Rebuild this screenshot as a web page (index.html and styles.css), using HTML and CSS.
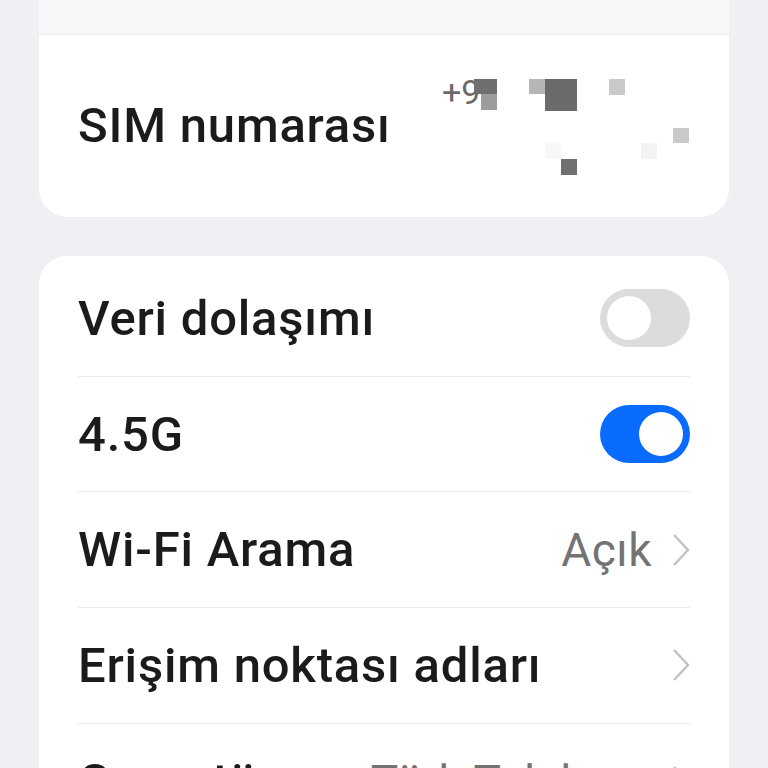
FILE: index.html
```html
<!DOCTYPE html>
<html lang="tr">
<head>
<meta charset="utf-8">
<title>SIM ayarları</title>
<link rel="stylesheet" href="styles.css">
</head>
<body>
<main class="screen">
  <section class="card card-top">
    <div class="prev-row"></div>
    <div class="row row-sim">
      <span class="label">SIM numarası</span>
      <div class="sim-value">
        <span class="sim-prefix">+9</span>
        <i class="px" style="left:30px;top:0;width:23px;height:15px;background:#6f6f6f"></i>
        <i class="px" style="left:37px;top:15px;width:16px;height:16px;background:#9c9c9c"></i>
        <i class="px" style="left:85px;top:0;width:16px;height:15px;background:#b6b6b6"></i>
        <i class="px" style="left:101px;top:0;width:32px;height:32px;background:#6b6b6b"></i>
        <i class="px" style="left:165px;top:0;width:16px;height:16px;background:#c9c9c9"></i>
        <i class="px" style="left:229px;top:49px;width:16px;height:15px;background:#c9c9c9"></i>
        <i class="px" style="left:197px;top:64px;width:16px;height:16px;background:#f3f3f3"></i>
        <i class="px" style="left:101px;top:64px;width:16px;height:16px;background:#f8f8f8"></i>
        <i class="px" style="left:117px;top:80px;width:16px;height:16px;background:#707070"></i>
      </div>
    </div>
  </section>

  <section class="card card-main">
    <div class="row">
      <span class="label">Veri dolaşımı</span>
      <span class="toggle"><span class="knob"></span></span>
    </div>
    <div class="row">
      <span class="label">4.5G</span>
      <span class="toggle on"><span class="knob"></span></span>
    </div>
    <div class="row">
      <span class="label">Wi-Fi Arama</span>
      <span class="trail"><span class="value">Açık</span><svg class="chev" viewBox="0 0 18 34"><path d="M2 2 L16 17 L2 32"/></svg></span>
    </div>
    <div class="row">
      <span class="label">Erişim noktası adları</span>
      <span class="trail"><svg class="chev" viewBox="0 0 18 34"><path d="M2 2 L16 17 L2 32"/></svg></span>
    </div>
    <div class="row last">
      <span class="label">Operatör</span>
      <span class="trail"><span class="value">Türk Telekom</span><svg class="chev" viewBox="0 0 18 34"><path d="M2 2 L16 17 L2 32"/></svg></span>
    </div>
  </section>
</main>
</body>
</html>
```

FILE: styles.css
```css
* { box-sizing: border-box; }
html, body {
  margin: 0;
  padding: 0;
  height: 768px;
  overflow: hidden;
  background: #eff0f3;
  font-family: Roboto, "Noto Sans", "Liberation Sans", sans-serif;
}
.screen {
  display: flex;
  flex-direction: column;
  gap: 39px;
  padding: 0 39px;
}
.card {
  background: #ffffff;
  border-radius: 28px;
  padding: 0 39px;
}
.card-top {
  border-radius: 0 0 28px 28px;
}
.prev-row {
  height: 35px;
  margin: 0 -39px;
  background: #f7f7f8;
  border-bottom: 1px solid #ebebed;
}
.row {
  display: flex;
  align-items: center;
  justify-content: space-between;
  height: 115.7px;
  border-bottom: 1px solid #ececee;
}
.row.last { border-bottom: none; }
.row-sim {
  height: 182px;
  border-bottom: none;
  padding-bottom: 2px;
}
.card-main { padding-top: 5px; }
.label {
  font-size: 49px;
  font-weight: 500;
  color: #1b1b1b;
  letter-spacing: 0.8px;
}
.sim-value {
  position: relative;
  width: 250px;
  height: 100px;
  align-self: flex-start;
  margin-top: 44px;
  margin-right: -4px;
}
.sim-prefix {
  position: absolute;
  left: -2px;
  top: -7px;
  font-size: 34px;
  font-weight: 400;
  color: #6a6a6a;
}
.px {
  position: absolute;
  display: block;
}
.toggle {
  width: 90px;
  height: 58px;
  border-radius: 29px;
  background: #dcdcdc;
  display: flex;
  align-items: center;
  padding: 0 7px;
}
.toggle .knob {
  width: 44px;
  height: 44px;
  border-radius: 50%;
  background: #ffffff;
}
.toggle.on {
  background: #0a6bff;
  justify-content: flex-end;
}
.trail {
  display: flex;
  align-items: center;
  gap: 20px;
}
.value {
  font-size: 46px;
  color: #737373;
  letter-spacing: 0.5px;
}
.chev {
  width: 18px;
  height: 34px;
  fill: none;
  stroke: #c2c2c2;
  stroke-width: 2.4;
}
```
